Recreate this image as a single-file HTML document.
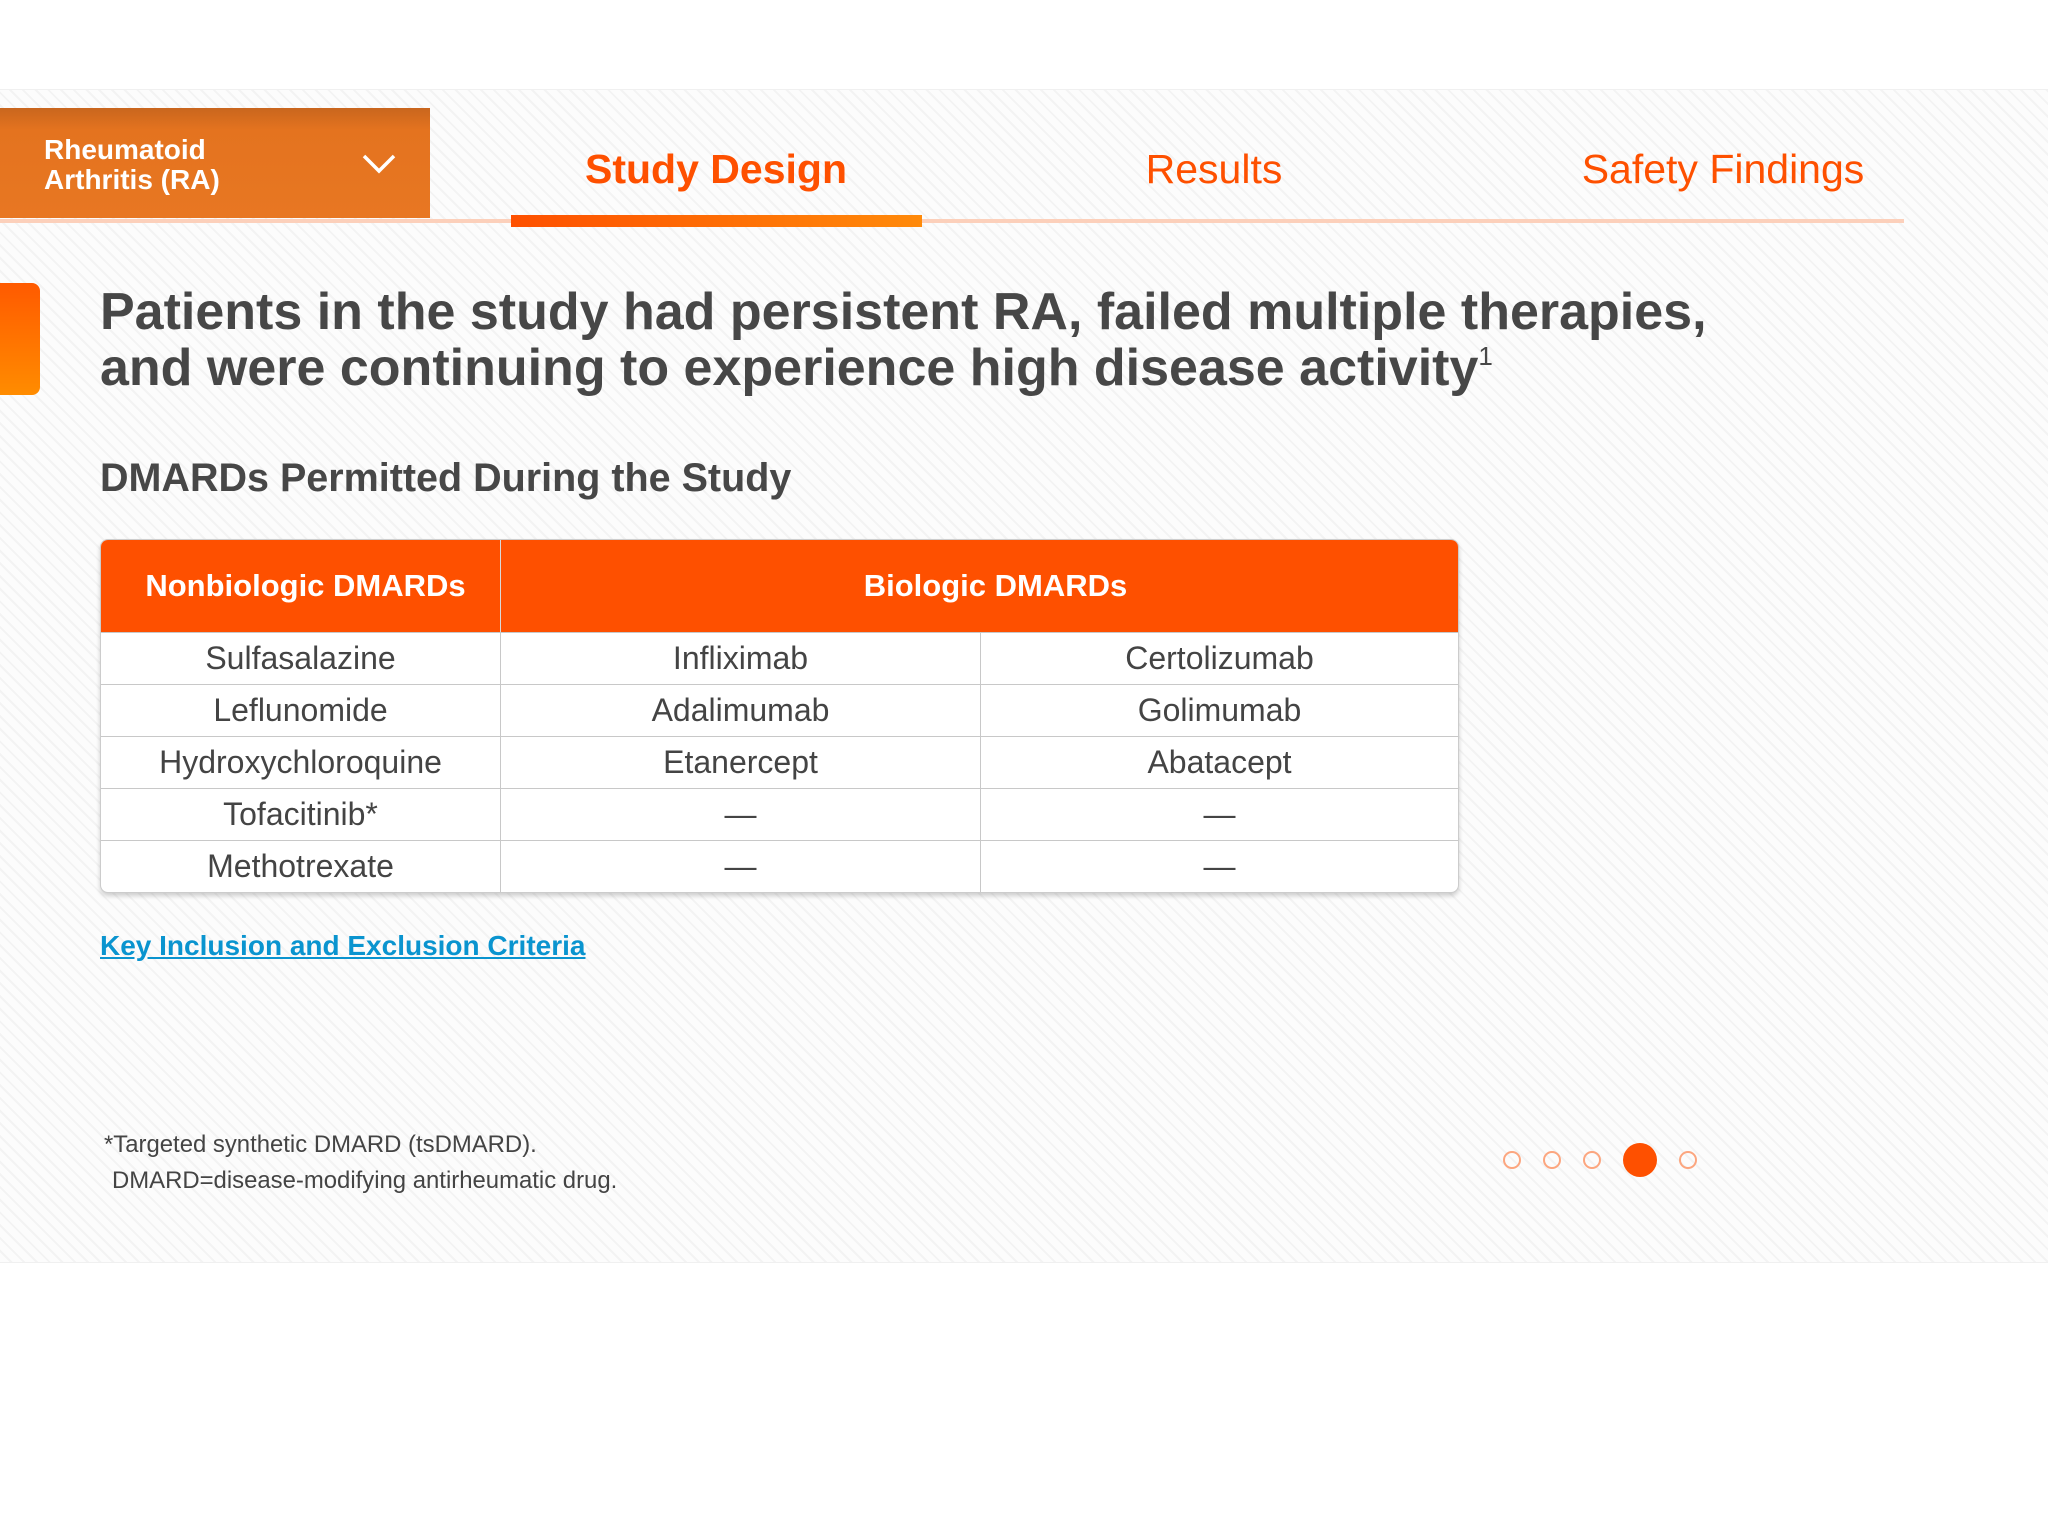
<!DOCTYPE html>
<html><head><meta charset="utf-8">
<style>
*{margin:0;padding:0;box-sizing:border-box}
body{width:2048px;height:1536px;background:#fff;font-family:"Liberation Sans",Arial,sans-serif;position:relative;overflow:hidden}
.panel{position:absolute;left:0;top:89px;width:2048px;height:1174px;background-color:#fcfcfc;
background-image:repeating-linear-gradient(45deg,#fcfcfc 0,#fcfcfc 7px,#f3f3f3 7px,#f3f3f3 9px);border-top:1px solid #f0f0f0;border-bottom:1px solid #f0f0f0}
.dd{position:absolute;left:0;top:108px;width:430px;height:110px;background:linear-gradient(#c9661e 0,#e4731f 22px,#e87722 100%);color:#fff;font-weight:bold;font-size:28px;line-height:30px;padding:27px 0 0 44px}
.chev{position:absolute;left:362px;top:153px}
.tab{position:absolute;top:146px;font-size:41px;color:#fe5000;transform:translateX(-50%);white-space:nowrap}
.line{position:absolute;left:0;top:219px;width:1904px;height:4px;background:#fcd0bb}
.act{position:absolute;left:511px;top:215px;width:411px;height:12px;background:linear-gradient(90deg,#fe5000,#ff8a0a)}
.acc{position:absolute;left:0;top:283px;width:40px;height:112px;border-radius:0 8px 8px 0;background:linear-gradient(#ff5a00,#ff8c00)}
h1{position:absolute;left:100px;top:284px;font-size:52px;line-height:56px;color:#474747;font-weight:bold;white-space:nowrap}
h1 sup{font-size:26px;vertical-align:top;position:relative;top:-12px;font-weight:normal}
h2{position:absolute;left:100px;top:456px;font-size:39.5px;color:#474747;font-weight:bold;white-space:nowrap}
table{position:absolute;left:100px;top:539px;width:1359px;border-collapse:separate;border-spacing:0;border-radius:8px;overflow:hidden;box-shadow:0 3px 5px rgba(0,0,0,.18);border:1px solid #ccc;background:#fff}
th{background:#fe5000;color:#fff;font-size:31px;height:92px;font-weight:bold}
th+th{border-left:1px solid #d8d8d8}
td{height:52px;font-size:32px;color:#444;text-align:center;border-top:1px solid #c8c8c8}
td+td{border-left:1px solid #c8c8c8}
.link{position:absolute;left:100px;top:930px;font-size:28px;font-weight:bold;color:#0a94cf;text-decoration:underline;white-space:nowrap}
.fn{position:absolute;font-size:23.9px;color:#444;white-space:nowrap}
.dot{position:absolute;width:18px;height:18px;border:2px solid #fca67f;border-radius:50%}
</style></head><body>
<div class="panel"></div>
<div class="dd">Rheumatoid<br>Arthritis (RA)</div>
<svg class="chev" width="34" height="22" viewBox="0 0 34 22"><path d="M2 3 L17 18 L32 3" fill="none" stroke="#fff" stroke-width="3.5"/></svg>
<div class="line"></div>
<div class="act"></div>
<div class="tab" style="left:716px;font-weight:bold">Study Design</div>
<div class="tab" style="left:1214px">Results</div>
<div class="tab" style="left:1723px">Safety Findings</div>
<div class="acc"></div>
<h1>Patients in the study had persistent RA, failed multiple therapies,<br>and were continuing to experience high disease activity<sup>1</sup></h1>
<h2>DMARDs Permitted During the Study</h2>
<table>
<tr><th style="width:399px;padding-left:10px">Nonbiologic DMARDs</th><th colspan="2" style="padding-left:32px">Biologic DMARDs</th></tr>
<tr><td>Sulfasalazine</td><td style="width:480px">Infliximab</td><td>Certolizumab</td></tr>
<tr><td>Leflunomide</td><td>Adalimumab</td><td>Golimumab</td></tr>
<tr><td>Hydroxychloroquine</td><td>Etanercept</td><td>Abatacept</td></tr>
<tr><td>Tofacitinib*</td><td>—</td><td>—</td></tr>
<tr><td>Methotrexate</td><td>—</td><td>—</td></tr>
</table>
<div class="link">Key Inclusion and Exclusion Criteria</div>
<div class="fn" style="left:104px;top:1131px">*Targeted synthetic DMARD (tsDMARD).</div>
<div class="fn" style="left:112px;top:1167px">DMARD=disease-modifying antirheumatic drug.</div>
<div class="dot" style="left:1503px;top:1151px"></div>
<div class="dot" style="left:1543px;top:1151px"></div>
<div class="dot" style="left:1583px;top:1151px"></div>
<div style="position:absolute;left:1623px;top:1143px;width:34px;height:34px;border-radius:50%;background:#fe5000"></div>
<div class="dot" style="left:1679px;top:1151px"></div>
</body></html>
